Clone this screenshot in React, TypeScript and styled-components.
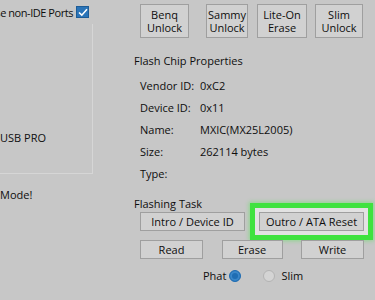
import { Fragment } from 'react';
import styled, { createGlobalStyle } from 'styled-components';

const GlobalStyle = createGlobalStyle`
  html, body {
    margin: 0;
    padding: 0;
    background: #c7c7c7;
  }
  * {
    box-sizing: border-box;
  }
`;

const Window = styled.div`
  width: 375px;
  height: 300px;
  overflow: hidden;
  display: grid;
  grid-template-columns: 93px 1fr;
  background: #c7c7c7;
  font-family: "Open Sans", "Noto Sans", sans-serif;
  font-size: 11px;
  color: #0e0e0e;
`;

const LeftPane = styled.div`
  display: flex;
  flex-direction: column;
  overflow: hidden;
`;

const PortOption = styled.label`
  display: flex;
  align-items: center;
  justify-content: flex-end;
  gap: 3px;
  height: 24px;
  padding: 0 4px 0 0;
  white-space: nowrap;
  overflow: hidden;
  letter-spacing: -0.45px;
`;

const CheckBox = styled.span`
  flex: none;
  width: 13px;
  height: 12px;
  background: #2a74b8;
  border: 1px solid #1d5c96;
  display: flex;
  align-items: center;
  justify-content: center;
`;

const GroupBox = styled.div`
  height: 150px;
  border-right: 1px solid #d6d6d6;
  border-bottom: 1px solid #d6d6d6;
  display: flex;
  flex-direction: column;
  justify-content: flex-end;
  padding-bottom: 28px;
  white-space: nowrap;
`;

const ModeLine = styled.div`
  margin-top: 13px;
  white-space: nowrap;
`;

const RightPane = styled.div`
  display: flex;
  flex-direction: column;
  padding-left: 47px;
`;

const ToolRow = styled.div`
  display: flex;
  margin-top: 4px;
`;

const Button = styled.div<{ $w?: number; $h?: number; $ml?: number; $highlight?: boolean }>`
  width: ${p => p.$w ?? 60}px;
  height: ${p => p.$h ?? 19}px;
  margin-left: ${p => p.$ml ?? 0}px;
  background: #d1d1d1;
  border: 1px solid #9f9f9f;
  display: flex;
  align-items: center;
  justify-content: center;
  text-align: center;
  line-height: 13px;
  white-space: nowrap;
  box-shadow: ${p => p.$highlight
    ? '0 0 0 4px #e2e2e2, 0 0 0 9px #3fe23f, 0 0 4px 10px rgba(70, 230, 70, 0.45)'
    : 'none'};
`;

const SectionTitle = styled.div<{ $mt: number }>`
  margin-left: -6px;
  margin-top: ${p => p.$mt}px;
  line-height: 15px;
`;

const PropList = styled.div`
  display: grid;
  grid-template-columns: 60px 1fr;
  grid-auto-rows: 22px;
  align-items: center;
  margin-top: 6px;
`;

const ActionRow = styled.div<{ $mt: number }>`
  display: flex;
  justify-content: space-between;
  width: 224px;
  margin-top: ${p => p.$mt}px;
`;

const RadioRow = styled.div`
  display: flex;
  align-items: center;
  margin-top: 9px;
  padding-left: 63px;
  height: 15px;
`;

const Radio = styled.span<{ $on?: boolean }>`
  width: 12px;
  height: 12px;
  border-radius: 50%;
  margin: 0 6px 0 3px;
  border: 1px solid ${p => (p.$on ? '#1f6db3' : '#b3b3b3')};
  background: ${p => (p.$on ? '#1f6db3' : '#d4d4d4')};
  box-shadow: ${p => (p.$on ? 'inset 0 0 0 2px #3a86c8' : 'none')};
`;

const RadioGap = styled.span`
  width: 13px;
`;

const props = [
  ['Vendor ID:', '0xC2'],
  ['Device ID:', '0x11'],
  ['Name:', 'MXIC(MX25L2005)'],
  ['Size:', '262114 bytes'],
  ['Type:', ''],
];

export default function App() {
  return (
    <Window>
      <GlobalStyle />
      <LeftPane>
        <PortOption>
          <span>Use non-IDE Ports</span>
          <CheckBox>
            <svg width="10" height="9" viewBox="0 0 10 9">
              <path d="M1 4.5 L3.8 7.2 L9 1.2" fill="none" stroke="#fff" strokeWidth="1.6" />
            </svg>
          </CheckBox>
        </PortOption>
        <GroupBox>
          <span>USB PRO</span>
        </GroupBox>
        <ModeLine>Mode!</ModeLine>
      </LeftPane>

      <RightPane>
        <ToolRow>
          <Button $w={49} $h={34}>Benq<br />Unlock</Button>
          <Button $w={42} $h={34} $ml={17}>Sammy<br />Unlock</Button>
          <Button $w={50} $h={34} $ml={9}>Lite-On<br />Erase</Button>
          <Button $w={48} $h={34} $ml={8}>Slim<br />Unlock</Button>
        </ToolRow>

        <SectionTitle $mt={15}>Flash Chip Properties</SectionTitle>
        <PropList>
          {props.map(([k, v]) => (
            <Fragment key={k}>
              <span>{k}</span>
              <span>{v}</span>
            </Fragment>
          ))}
        </PropList>

        <SectionTitle $mt={12}>Flashing Task</SectionTitle>
        <ActionRow $mt={1}>
          <Button $w={105}>Intro / Device ID</Button>
          <Button $w={105} $highlight>Outro / ATA Reset</Button>
        </ActionRow>
        <ActionRow $mt={9}>
          <Button $w={63}>Read</Button>
          <Button $w={61}>Erase</Button>
          <Button $w={63}>Write</Button>
        </ActionRow>

        <RadioRow>
          <span>Phat</span>
          <Radio $on />
          <RadioGap />
          <Radio />
          <span>Slim</span>
        </RadioRow>
      </RightPane>
    </Window>
  );
}
